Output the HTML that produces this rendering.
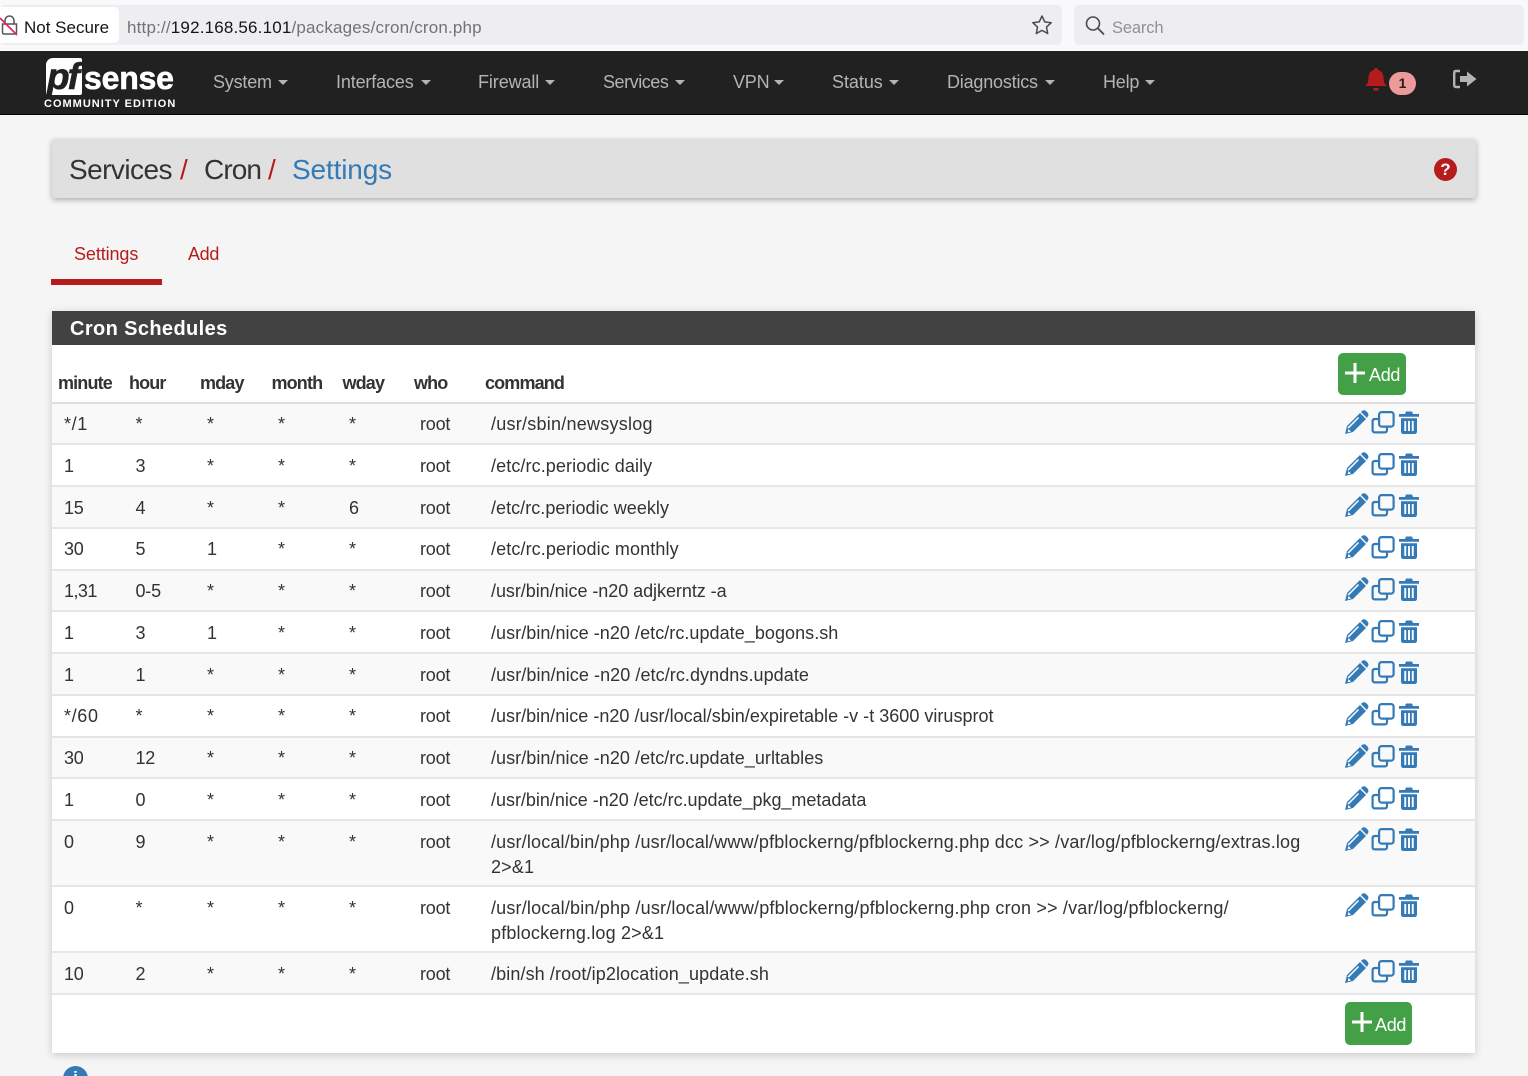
<!DOCTYPE html>
<html lang="en"><head><meta charset="utf-8"><title>Services / Cron / Settings</title>
<style>
*{box-sizing:border-box}
html,body{margin:0;padding:0;width:1528px;height:1076px;overflow:hidden;background:#f5f5f5}
body{position:relative;font-family:"Liberation Sans",sans-serif;color:#333}
.a,.t span,.h span{position:absolute;white-space:nowrap}
.nav{position:absolute;top:70px;font-size:18px;line-height:24px;color:#b4b4b4;letter-spacing:-.2px;white-space:nowrap}
.nav i{display:inline-block;width:0;height:0;border:5px solid transparent;border-top-color:#b4b4b4;border-bottom:0;margin-left:6px;vertical-align:3px}
.r{position:absolute;left:52px;width:1423px;border-bottom:2px solid #e6e6e6;font-size:18px;line-height:25px;letter-spacing:-.2px;color:#333}
.r.s{background:#f9f9f9}
.r span{position:absolute;top:8px;white-space:nowrap}
.r.d span{top:9px}
.c1{left:12px}.c2{left:83.5px}.c3{left:155px}.c4{left:226px}.c5{left:297px}.c6{left:368px}.c7{left:439px}
.r svg{position:absolute;top:5px;left:1292px;width:76px;height:26px}
.r.e svg{top:6px}
.h span{top:0;font-weight:bold;font-size:18px;line-height:24px;letter-spacing:-.85px;color:#333}
.add{position:absolute;background:#43a047;border-radius:5px;color:#fff;font-size:18px;letter-spacing:-.3px}
.add svg{position:absolute;left:7px;top:10px}
.add b{position:absolute;left:31px;top:10px;font-weight:normal;line-height:24px}
</style></head><body>
<svg width="0" height="0" style="position:absolute"><defs>
<g id="ic">
<path fill="#337ab7" d="M1 25 L3 17 L16 4 L22 10 L9 23 Z M17.500 2.500 C19 1 20.500 1 22 2 L23.500 3.500 C24.800 5 24.800 6.500 23.300 8 L23 9 L17 3 Z"/>
<path fill="#fff" d="M3.500 18.500 L14 8 L15 9 L4.800 19.500 Z M4.500 20 L7 22.500 L3.700 23.300 Z"/>
<rect x="35.100" y="3.100" width="14.500" height="14.500" rx="2.500" fill="none" stroke="#337ab7" stroke-width="2.200"/>
<path fill="none" stroke="#337ab7" stroke-width="2.200" d="M34 10 H31 Q28.600 10 28.600 12.400 V21 Q28.600 23.400 31 23.400 H40.600 Q43 23.400 43 21 V18"/>
<path fill="#337ab7" d="M55 5 H61 L62 2.500 H68 L69 5 H75 V7.800 H55 Z M57 9.300 H73 V22.500 Q73 25 70.500 25 H59.500 Q57 25 57 22.500 Z"/>
<path fill="#fff" d="M60.300 12 H62.200 V22 H60.300 Z M64.050 12 H65.950 V22 H64.050 Z M67.800 12 H69.700 V22 H67.800 Z"/>
</g></defs></svg>

<div class="a" style="left:0;top:0;width:1528px;height:51px;background:#f9f9fb"></div>
<div class="a" style="left:0;top:5px;width:1062px;height:40px;background:#eeeef0;border-radius:5px"></div>
<div class="a" style="left:-4px;top:7px;width:123px;height:36px;background:#fff;border-radius:5px"></div>
<svg class="a" style="left:0;top:14px" width="20" height="22" viewBox="0 0 20 22"><path fill="none" stroke="#555" stroke-width="1.500" d="M5 10V6.500a4.500 4.500 0 0 1 9 0V10M2.500 10h14v8.500a1.500 1.500 0 0 1-1.500 1.500H4a1.500 1.500 0 0 1-1.500-1.500z"/><path stroke="#e0245e" stroke-width="1.700" d="M0 4L17 21"/></svg>
<div class="a" style="left:24px;top:16px;font-size:17px;line-height:24px;color:#15141a">Not Secure</div>
<div class="a" style="left:127px;top:16px;font-size:17px;line-height:24px;color:#72727a;letter-spacing:.18px">http://<span style="color:#15141a">192.168.56.101</span>/packages/cron/cron.php</div>
<svg class="a" style="left:1031px;top:14px" width="22" height="22" viewBox="0 0 22 22"><path fill="none" stroke="#4a4a4f" stroke-width="1.500" stroke-linejoin="round" d="M11 2l2.800 5.900 6.400.8-4.700 4.400 1.200 6.400L11 16.400l-5.700 3.100 1.200-6.400-4.700-4.400 6.400-.8z"/></svg>
<div class="a" style="left:1074px;top:5px;width:450px;height:40px;background:#eeeef0;border-radius:5px"></div>
<svg class="a" style="left:1084px;top:15px" width="22" height="22" viewBox="0 0 22 22"><circle cx="9" cy="8.500" r="6.500" fill="none" stroke="#4a4a4f" stroke-width="1.600"/><path stroke="#4a4a4f" stroke-width="1.800" d="M13.800 13.300L20 19.500"/></svg>
<div class="a" style="left:1112px;top:16px;font-size:16.500px;line-height:24px;color:#8f8f96;letter-spacing:-.15px">Search</div>

<div class="a" style="left:0;top:51px;width:1528px;height:64px;background:#212121;border-bottom:1px solid #000"></div>
<div class="a" style="left:46px;top:58px;width:36px;height:37px;background:#fff;border-radius:7px 2px 2px 2px"></div>
<div class="a" style="left:47px;top:55px;font-size:37px;line-height:44px;font-weight:bold;font-style:italic;color:#212121;letter-spacing:-2px;-webkit-text-stroke:.6px #212121">pf</div>
<div class="a" style="left:84px;top:59px;font-size:32px;line-height:38px;font-weight:bold;color:#fff;letter-spacing:-.2px;-webkit-text-stroke:.6px #fff">sense</div>
<div class="a" style="left:44px;top:97px;font-size:11px;line-height:14px;font-weight:bold;color:#fff;letter-spacing:1px">COMMUNITY EDITION</div>
<div class="nav" style="left:213px">System<i></i></div>
<div class="nav" style="left:336px;letter-spacing:-.15px">Interfaces<i style="margin-left:7px"></i></div>
<div class="nav" style="left:478px;letter-spacing:-.1px">Firewall<i></i></div>
<div class="nav" style="left:603px;letter-spacing:-.45px">Services<i style="margin-left:7px"></i></div>
<div class="nav" style="left:733px">VPN<i style="margin-left:5px"></i></div>
<div class="nav" style="left:832px;letter-spacing:-.05px">Status<i></i></div>
<div class="nav" style="left:947px">Diagnostics<i style="margin-left:7px"></i></div>
<div class="nav" style="left:1103px">Help<i></i></div>
<svg class="a" style="left:1364px;top:67px" width="24" height="26" viewBox="0 0 24 26"><path fill="#b71c1c" d="M12 1c1.200 0 2 .8 2 2 4 .9 5.500 4 5.500 8 0 4 1.200 6 3.500 8H1c2.300-2 3.500-4 3.500-8 0-4 1.500-7.100 5.500-8 0-1.200.8-2 2-2zM9 21h6c0 1.800-1.300 3-3 3s-3-1.200-3-3z"/></svg>
<div class="a" style="left:1389px;top:72px;width:27px;height:23px;background:#ef9a9a;border-radius:12px;font-size:14px;font-weight:bold;line-height:23px;text-align:center;color:#212121">1</div>
<svg class="a" style="left:1452px;top:68px" width="26" height="24" viewBox="0 0 26 24"><path fill="none" stroke="#b4b4b4" stroke-width="2.400" d="M8 3H4Q2.200 3 2.200 5V17Q2.200 19 4 19H8"/><path fill="#b4b4b4" d="M8 8H15V3.500L24.500 11 15 18.500V14H8Z"/></svg>

<div class="a" style="left:52px;top:139px;width:1424px;height:59px;background:#e0e0e0;border-radius:3px;box-shadow:0 2px 6px rgba(0,0,0,.3)"></div>
<div class="a" style="left:69px;top:152px;font-size:28px;line-height:36px;letter-spacing:-.55px;color:#333">Services</div>
<div class="a" style="left:180px;top:152px;font-size:28px;line-height:36px;color:#b71c1c">/</div>
<div class="a" style="left:204px;top:152px;font-size:28px;line-height:36px;letter-spacing:-.9px;color:#333">Cron</div>
<div class="a" style="left:268px;top:152px;font-size:28px;line-height:36px;color:#b71c1c">/</div>
<div class="a" style="left:292px;top:152px;font-size:28px;line-height:36px;letter-spacing:-.15px;color:#337ab7">Settings</div>
<div class="a" style="left:1434px;top:158px;width:23px;height:23px;border-radius:50%;background:#b71c1c;color:#fff;font-size:17px;font-weight:bold;line-height:23px;text-align:center">?</div>

<div class="a" style="left:74px;top:242px;font-size:18px;line-height:24px;color:#b71c1c;letter-spacing:-.1px">Settings</div>
<div class="a" style="left:188px;top:242px;font-size:18px;line-height:24px;color:#b71c1c;letter-spacing:-.35px">Add</div>
<div class="a" style="left:51px;top:279px;width:111px;height:6px;background:#b71c1c"></div>

<div class="a" style="left:52px;top:311px;width:1423px;height:742px;background:#fff;box-shadow:0 2px 8px rgba(0,0,0,.18)"></div>
<div class="a" style="left:52px;top:311px;width:1423px;height:34px;background:#424242"></div>
<div class="a" style="left:70px;top:317px;font-size:20px;line-height:24px;font-weight:bold;color:#fff;letter-spacing:.38px">Cron Schedules</div>

<div class="h a" style="left:52px;top:371px;width:1000px;height:24px">
<span style="left:6px">minute</span><span style="left:77px">hour</span><span style="left:148px">mday</span><span style="left:219.500px">month</span><span style="left:290.500px">wday</span><span style="left:362px">who</span><span style="left:433px">command</span>
</div>
<div class="a" style="left:52px;top:402px;width:1423px;height:2px;background:#dedede"></div>

<div class="r s" style="top:404px;height:41px"><span class="c1" style="letter-spacing:.6px">*/1</span><span class="c2">*</span><span class="c3">*</span><span class="c4">*</span><span class="c5">*</span><span class="c6">root</span><span class="c7" style="letter-spacing:.25px">/usr/sbin/newsyslog</span><svg viewBox="0 0 76 26"><use href="#ic"/></svg></div>
<div class="r d e" style="top:445px;height:42px"><span class="c1">1</span><span class="c2">3</span><span class="c3">*</span><span class="c4">*</span><span class="c5">*</span><span class="c6">root</span><span class="c7" style="letter-spacing:.1px">/etc/rc.periodic daily</span><svg viewBox="0 0 76 26"><use href="#ic"/></svg></div>
<div class="r s d" style="top:487px;height:42px"><span class="c1">15</span><span class="c2">4</span><span class="c3">*</span><span class="c4">*</span><span class="c5">6</span><span class="c6">root</span><span class="c7" style="letter-spacing:.04px">/etc/rc.periodic weekly</span><svg viewBox="0 0 76 26"><use href="#ic"/></svg></div>
<div class="r" style="top:529px;height:42px"><span class="c1">30</span><span class="c2">5</span><span class="c3">1</span><span class="c4">*</span><span class="c5">*</span><span class="c6">root</span><span class="c7" style="letter-spacing:.11px">/etc/rc.periodic monthly</span><svg viewBox="0 0 76 26"><use href="#ic"/></svg></div>
<div class="r s" style="top:571px;height:41px"><span class="c1" style="letter-spacing:-.55px">1,31</span><span class="c2">0-5</span><span class="c3">*</span><span class="c4">*</span><span class="c5">*</span><span class="c6">root</span><span class="c7" style="letter-spacing:-.05px">/usr/bin/nice -n20 adjkerntz -a</span><svg viewBox="0 0 76 26"><use href="#ic"/></svg></div>
<div class="r d e" style="top:612px;height:42px"><span class="c1">1</span><span class="c2">3</span><span class="c3">1</span><span class="c4">*</span><span class="c5">*</span><span class="c6">root</span><span class="c7" style="letter-spacing:.05px">/usr/bin/nice -n20 /etc/rc.update_bogons.sh</span><svg viewBox="0 0 76 26"><use href="#ic"/></svg></div>
<div class="r s d" style="top:654px;height:42px"><span class="c1">1</span><span class="c2">1</span><span class="c3">*</span><span class="c4">*</span><span class="c5">*</span><span class="c6">root</span><span class="c7" style="letter-spacing:.07px">/usr/bin/nice -n20 /etc/rc.dyndns.update</span><svg viewBox="0 0 76 26"><use href="#ic"/></svg></div>
<div class="r" style="top:696px;height:42px"><span class="c1" style="letter-spacing:.65px">*/60</span><span class="c2">*</span><span class="c3">*</span><span class="c4">*</span><span class="c5">*</span><span class="c6">root</span><span class="c7" style="letter-spacing:.02px">/usr/bin/nice -n20 /usr/local/sbin/expiretable -v -t 3600 virusprot</span><svg viewBox="0 0 76 26"><use href="#ic"/></svg></div>
<div class="r s" style="top:738px;height:41px"><span class="c1">30</span><span class="c2">12</span><span class="c3">*</span><span class="c4">*</span><span class="c5">*</span><span class="c6">root</span><span class="c7" style="letter-spacing:.05px">/usr/bin/nice -n20 /etc/rc.update_urltables</span><svg viewBox="0 0 76 26"><use href="#ic"/></svg></div>
<div class="r d e" style="top:779px;height:42px"><span class="c1">1</span><span class="c2">0</span><span class="c3">*</span><span class="c4">*</span><span class="c5">*</span><span class="c6">root</span><span class="c7" style="letter-spacing:-.02px">/usr/bin/nice -n20 /etc/rc.update_pkg_metadata</span><svg viewBox="0 0 76 26"><use href="#ic"/></svg></div>
<div class="r s d" style="top:821px;height:66px"><span class="c1">0</span><span class="c2">9</span><span class="c3">*</span><span class="c4">*</span><span class="c5">*</span><span class="c6">root</span><span class="c7" style="letter-spacing:.17px">/usr/local/bin/php /usr/local/www/pfblockerng/pfblockerng.php dcc &gt;&gt; /var/log/pfblockerng/extras.log<br>2&gt;&amp;1</span><svg viewBox="0 0 76 26"><use href="#ic"/></svg></div>
<div class="r d" style="top:887px;height:66px"><span class="c1">0</span><span class="c2">*</span><span class="c3">*</span><span class="c4">*</span><span class="c5">*</span><span class="c6">root</span><span class="c7" style="letter-spacing:.18px">/usr/local/bin/php /usr/local/www/pfblockerng/pfblockerng.php cron &gt;&gt; /var/log/pfblockerng/<br>pfblockerng.log 2&gt;&amp;1</span><svg viewBox="0 0 76 26"><use href="#ic"/></svg></div>
<div class="r s d" style="top:953px;height:42px"><span class="c1">10</span><span class="c2">2</span><span class="c3">*</span><span class="c4">*</span><span class="c5">*</span><span class="c6">root</span><span class="c7" style="letter-spacing:.11px">/bin/sh /root/ip2location_update.sh</span><svg viewBox="0 0 76 26"><use href="#ic"/></svg></div>

<div class="add" style="left:1338px;top:353px;width:68px;height:42px"><svg width="20" height="20" viewBox="0 0 20 20"><path stroke="#fff" stroke-width="3" d="M10 0V20M0 10H20"/></svg><b>Add</b></div>
<div class="add" style="left:1345px;top:1002px;width:67px;height:43px"><svg width="20" height="20" viewBox="0 0 20 20"><path stroke="#fff" stroke-width="3" d="M10 0V20M0 10H20"/></svg><b style="left:30px;top:10px;margin-top:1px">Add</b></div>

<div class="a" style="left:63px;top:1066px;width:25px;height:25px;border-radius:50%;background:#337ab7;color:#fff;font-size:17px;font-weight:bold;line-height:24px;text-align:center">i</div>
</body></html>
